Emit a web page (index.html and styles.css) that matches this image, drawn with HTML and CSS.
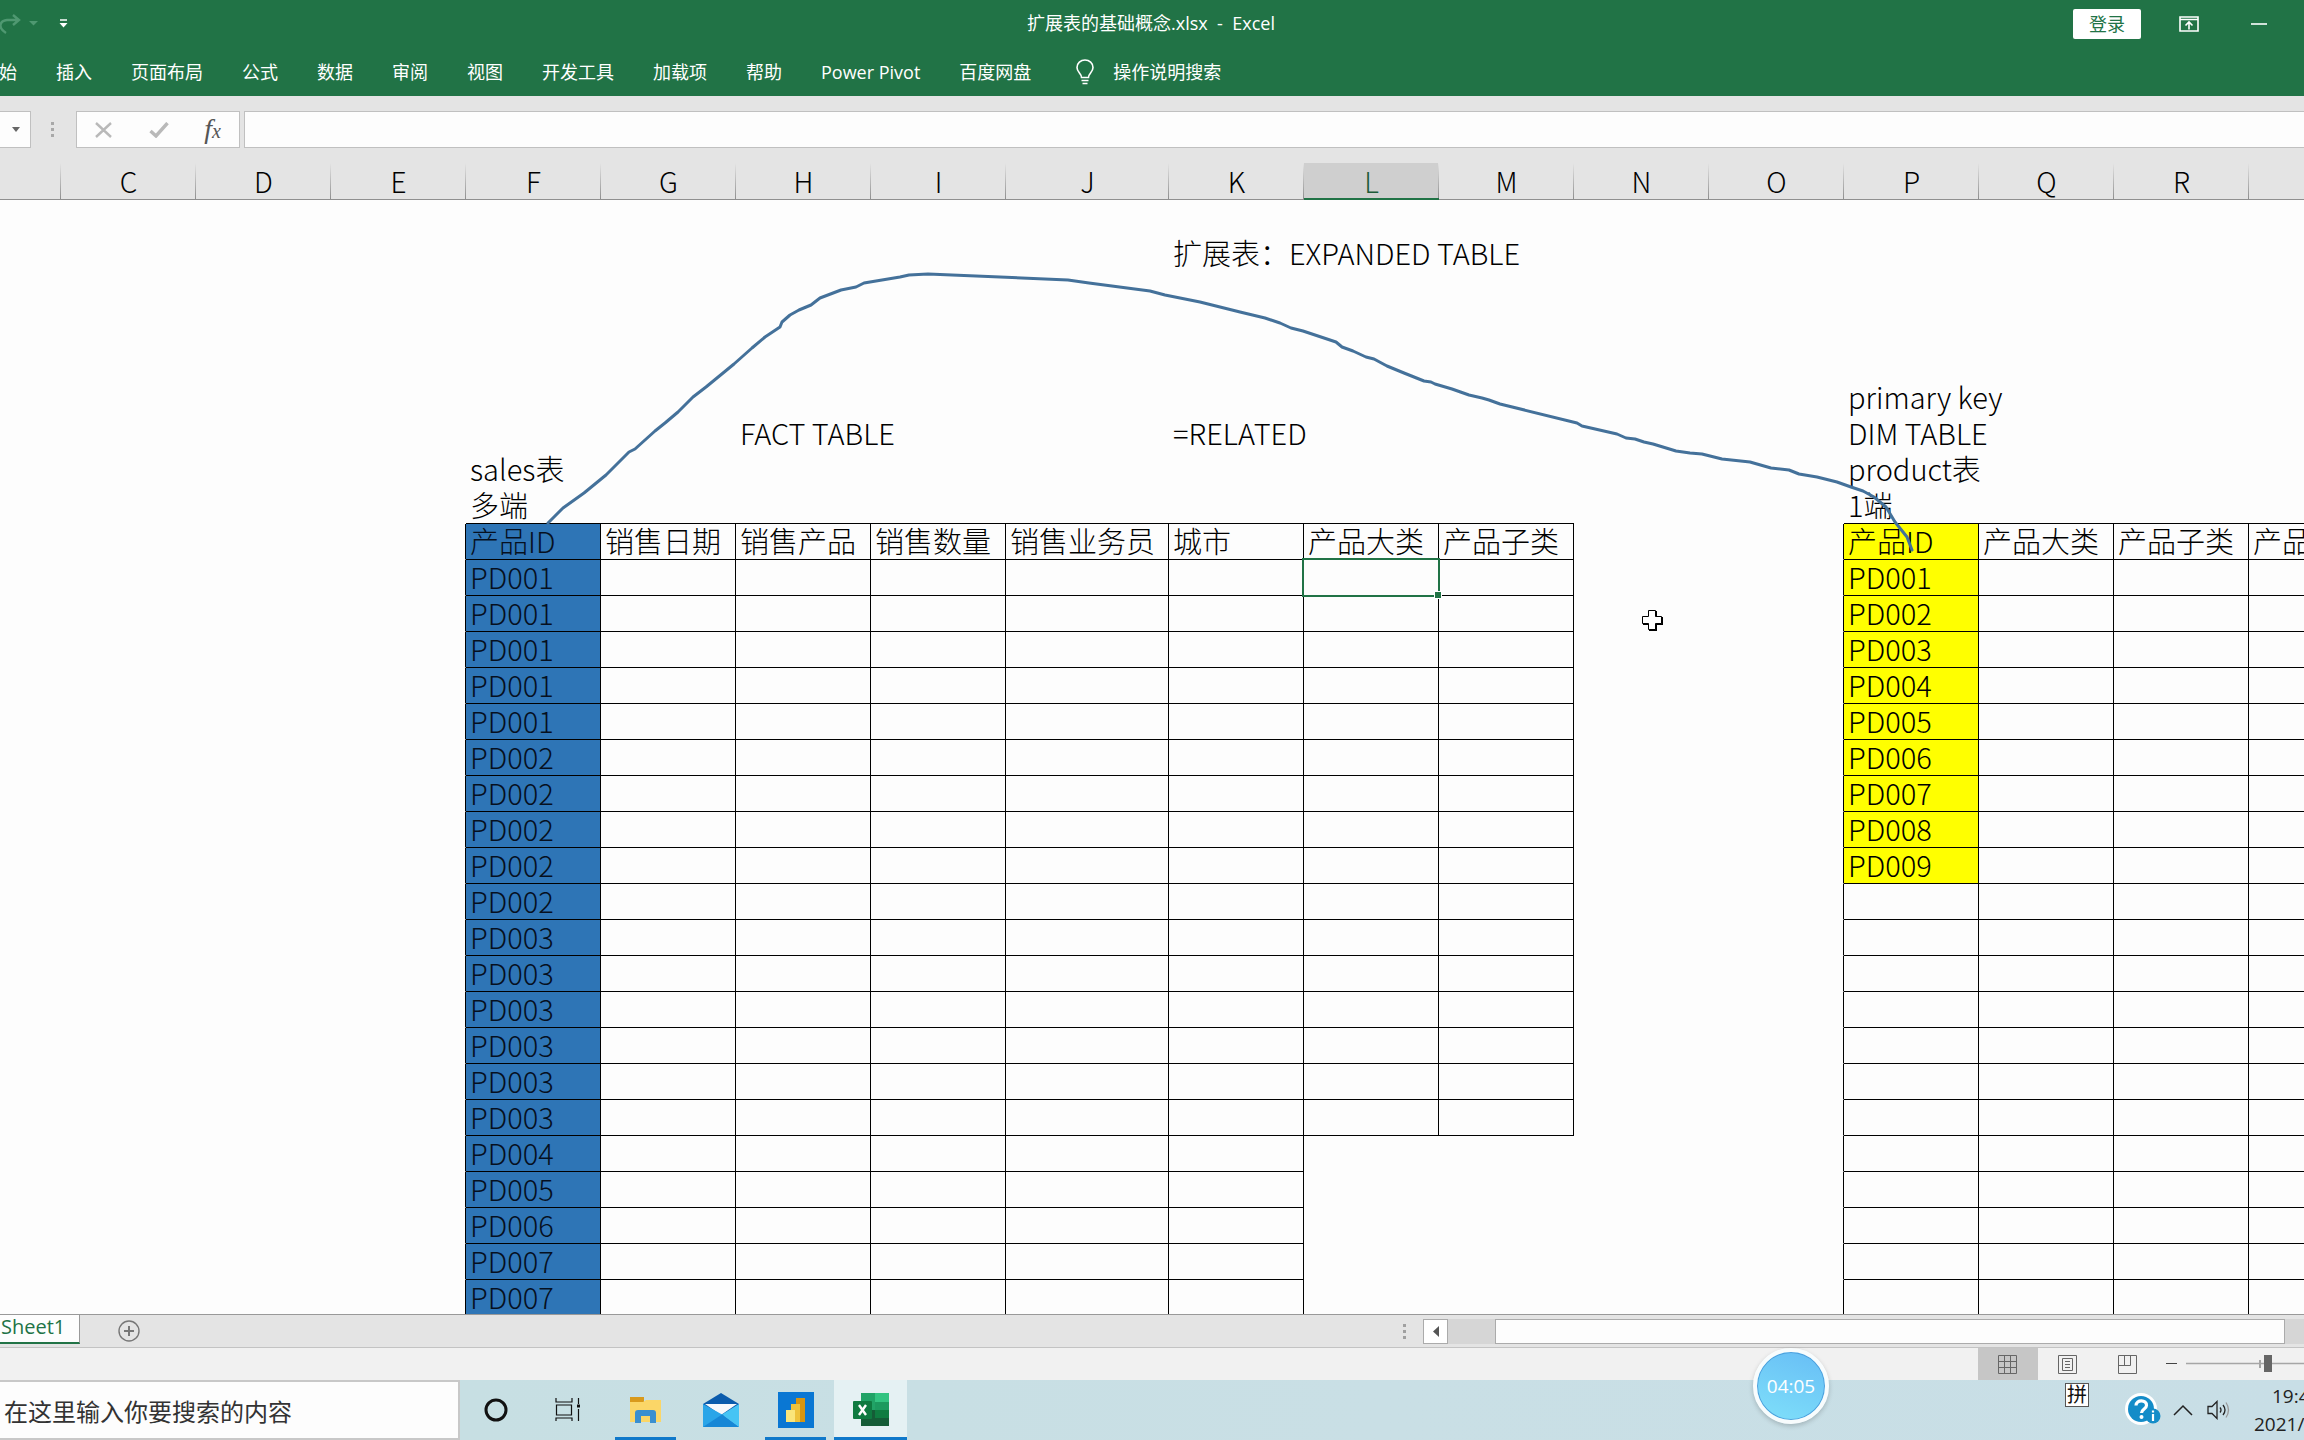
FILE: index.html
```html
<!DOCTYPE html>
<html lang="zh-CN">
<head>
<meta charset="utf-8">
<title>扩展表的基础概念.xlsx - Excel</title>
<link rel="stylesheet" href="styles.css">
</head>
<body>
<header class="ribbon">
  <div class="titlebar">
    <div class="quick">
      <svg width="80" height="20" viewBox="0 0 80 20" aria-hidden="true">
        <path d="M6 19C-2 14-1 7 7 6h11M13 1l6 5-6 5" fill="none" stroke="#4f9871" stroke-width="2.4"/>
        <path d="M29 7h9l-4.500 4.500z" fill="#4f9871"/>
        <path d="M60 6h7" stroke="#fff" stroke-width="1.500"/><path d="M59.500 9h8l-4 4.500z" fill="#fff"/>
      </svg>
    </div>
    <h1 class="title">扩展表的基础概念.xlsx&nbsp; -&nbsp; Excel</h1>
    <div class="window-tools">
      <button class="login">登录</button>
      <button class="icon-btn" aria-label="功能区显示选项"><svg width="20" height="16" viewBox="0 0 20 16"><path d="M1 1h18v14H1zM1 3.500h18M10 13.500V6.500M6.500 9.500 10 6l3.500 3.500" fill="none" stroke="#fff" stroke-width="1.600"/></svg></button>
      <button class="icon-btn" aria-label="最小化"><svg width="16" height="16" viewBox="0 0 16 16"><path d="M0 8h16" stroke="#fff" stroke-width="1.600"/></svg></button>
    </div>
  </div>
  <nav class="tabs">
    <a href="#">开始</a><a href="#">插入</a><a href="#">页面布局</a><a href="#">公式</a><a href="#">数据</a><a href="#">审阅</a><a href="#">视图</a><a href="#">开发工具</a><a href="#">加载项</a><a href="#">帮助</a><a href="#">Power Pivot</a><a href="#">百度网盘</a>
    <a href="#" class="tell-me"><svg width="18" height="26" viewBox="0 0 18 26" aria-hidden="true"><path d="M5.500 18.500c0-4-4.500-5-4.500-10a8 7.500 0 0 1 16 0c0 5-4.500 6-4.500 10zM5.500 21.500h7M6.500 24.500h5" fill="none" stroke="#fff" stroke-width="1.600"/></svg>操作说明搜索</a>
  </nav>
</header>

<div class="formula-bar">
  <button class="name-drop" aria-label="名称框"><svg width="8" height="5" viewBox="0 0 8 5"><path d="M0 0h8L4 5z" fill="#666"/></svg></button>
  <svg class="dots" width="3" height="15" viewBox="0 0 3 15" aria-hidden="true"><path d="M0 0h3v3H0zM0 6h3v3H0zM0 12h3v3H0z" fill="#a8a8a8"/></svg>
  <div class="fx-group">
    <button aria-label="取消"><svg width="18" height="16" viewBox="0 0 18 16"><path d="M1 1l15 14M16 1 1 15" stroke="#b9b9b9" stroke-width="2.400"/></svg></button>
    <button aria-label="输入"><svg width="20" height="16" viewBox="0 0 20 16"><path d="M1.500 9 7 14 18.500 1" fill="none" stroke="#b9b9b9" stroke-width="3.400"/></svg></button>
    <button class="fx" aria-label="插入函数">f<small>x</small></button>
  </div>
  <input class="formula" type="text" aria-label="编辑栏">
</div>

<main class="sheet">
<table class="grid">
<colgroup><col span="8"><col class="wide"><col span="9"></colgroup>
<thead><tr><th class="partial">B</th><th>C</th><th>D</th><th>E</th><th>F</th><th>G</th><th>H</th><th>I</th><th>J</th><th>K</th><th class="on">L</th><th>M</th><th>N</th><th>O</th><th>P</th><th>Q</th><th>R</th><th>S</th></tr></thead>
<tbody class="free">
<tr><td colspan="18"></td></tr>
<tr><td colspan="9"></td><td colspan="3">扩展表：EXPANDED TABLE</td><td colspan="6"></td></tr>
<tr><td colspan="18"></td></tr>
<tr><td colspan="18"></td></tr>
<tr><td colspan="18"></td></tr>
<tr><td colspan="14"></td><td colspan="2">primary key</td><td colspan="2"></td></tr>
<tr><td colspan="6"></td><td colspan="2">FACT TABLE</td><td></td><td colspan="2">=RELATED</td><td colspan="3"></td><td colspan="2">DIM TABLE</td><td colspan="2"></td></tr>
<tr><td colspan="4"></td><td>sales表</td><td colspan="9"></td><td>product表</td><td colspan="3"></td></tr>
<tr><td colspan="4"></td><td class="edge">多端</td><td colspan="7" class="edge"></td><td colspan="2"></td><td class="edge">1端</td><td colspan="3" class="edge"></td></tr>
</tbody>
<tbody class="data">
<tr><td class="gap" colspan="4"></td><td class="fact">产品ID</td><td>销售日期</td><td>销售产品</td><td>销售数量</td><td>销售业务员</td><td>城市</td><td>产品大类</td><td>产品子类</td><td class="gap" colspan="2"></td><td class="dim">产品ID</td><td>产品大类</td><td>产品子类</td><td>产品名称</td></tr>
<tr><td class="gap" colspan="4"></td><td class="fact">PD001</td><td></td><td></td><td></td><td></td><td></td><td class="active"></td><td></td><td class="gap" colspan="2"></td><td class="dim">PD001</td><td></td><td></td><td></td></tr>
<tr><td class="gap" colspan="4"></td><td class="fact">PD001</td><td></td><td></td><td></td><td></td><td></td><td></td><td></td><td class="gap" colspan="2"></td><td class="dim">PD002</td><td></td><td></td><td></td></tr>
<tr><td class="gap" colspan="4"></td><td class="fact">PD001</td><td></td><td></td><td></td><td></td><td></td><td></td><td></td><td class="gap" colspan="2"></td><td class="dim">PD003</td><td></td><td></td><td></td></tr>
<tr><td class="gap" colspan="4"></td><td class="fact">PD001</td><td></td><td></td><td></td><td></td><td></td><td></td><td></td><td class="gap" colspan="2"></td><td class="dim">PD004</td><td></td><td></td><td></td></tr>
<tr><td class="gap" colspan="4"></td><td class="fact">PD001</td><td></td><td></td><td></td><td></td><td></td><td></td><td></td><td class="gap" colspan="2"></td><td class="dim">PD005</td><td></td><td></td><td></td></tr>
<tr><td class="gap" colspan="4"></td><td class="fact">PD002</td><td></td><td></td><td></td><td></td><td></td><td></td><td></td><td class="gap" colspan="2"></td><td class="dim">PD006</td><td></td><td></td><td></td></tr>
<tr><td class="gap" colspan="4"></td><td class="fact">PD002</td><td></td><td></td><td></td><td></td><td></td><td></td><td></td><td class="gap" colspan="2"></td><td class="dim">PD007</td><td></td><td></td><td></td></tr>
<tr><td class="gap" colspan="4"></td><td class="fact">PD002</td><td></td><td></td><td></td><td></td><td></td><td></td><td></td><td class="gap" colspan="2"></td><td class="dim">PD008</td><td></td><td></td><td></td></tr>
<tr><td class="gap" colspan="4"></td><td class="fact">PD002</td><td></td><td></td><td></td><td></td><td></td><td></td><td></td><td class="gap" colspan="2"></td><td class="dim">PD009</td><td></td><td></td><td></td></tr>
<tr><td class="gap" colspan="4"></td><td class="fact">PD002</td><td></td><td></td><td></td><td></td><td></td><td></td><td></td><td class="gap" colspan="2"></td><td></td><td></td><td></td><td></td></tr>
<tr><td class="gap" colspan="4"></td><td class="fact">PD003</td><td></td><td></td><td></td><td></td><td></td><td></td><td></td><td class="gap" colspan="2"></td><td></td><td></td><td></td><td></td></tr>
<tr><td class="gap" colspan="4"></td><td class="fact">PD003</td><td></td><td></td><td></td><td></td><td></td><td></td><td></td><td class="gap" colspan="2"></td><td></td><td></td><td></td><td></td></tr>
<tr><td class="gap" colspan="4"></td><td class="fact">PD003</td><td></td><td></td><td></td><td></td><td></td><td></td><td></td><td class="gap" colspan="2"></td><td></td><td></td><td></td><td></td></tr>
<tr><td class="gap" colspan="4"></td><td class="fact">PD003</td><td></td><td></td><td></td><td></td><td></td><td></td><td></td><td class="gap" colspan="2"></td><td></td><td></td><td></td><td></td></tr>
<tr><td class="gap" colspan="4"></td><td class="fact">PD003</td><td></td><td></td><td></td><td></td><td></td><td></td><td></td><td class="gap" colspan="2"></td><td></td><td></td><td></td><td></td></tr>
<tr><td class="gap" colspan="4"></td><td class="fact">PD003</td><td></td><td></td><td></td><td></td><td></td><td></td><td></td><td class="gap" colspan="2"></td><td></td><td></td><td></td><td></td></tr>
<tr><td class="gap" colspan="4"></td><td class="fact">PD004</td><td></td><td></td><td></td><td></td><td></td><td class="gap" colspan="4"></td><td></td><td></td><td></td><td></td></tr>
<tr><td class="gap" colspan="4"></td><td class="fact">PD005</td><td></td><td></td><td></td><td></td><td></td><td class="gap" colspan="4"></td><td></td><td></td><td></td><td></td></tr>
<tr><td class="gap" colspan="4"></td><td class="fact">PD006</td><td></td><td></td><td></td><td></td><td></td><td class="gap" colspan="4"></td><td></td><td></td><td></td><td></td></tr>
<tr><td class="gap" colspan="4"></td><td class="fact">PD007</td><td></td><td></td><td></td><td></td><td></td><td class="gap" colspan="4"></td><td></td><td></td><td></td><td></td></tr>
<tr><td class="gap" colspan="4"></td><td class="fact">PD007</td><td></td><td></td><td></td><td></td><td></td><td class="gap" colspan="4"></td><td></td><td></td><td></td><td></td></tr>
</tbody>
</table>
<!-- Freehand line from the fact key to the dimension key, and the cell cursor -->
<svg class="ink" width="2304" height="1151" viewBox="0 163 2304 1151" aria-hidden="true">
  <polyline fill="none" stroke="#44719a" stroke-width="3" stroke-linejoin="round" stroke-linecap="round" points="548,523 563,508 584,493 606,475 629,452 635,449 655,431 665,423 678,412 693,397 706,387 734,364 752,348 765,337 780,327 782,322 790,315 799,310 811,305 820,298 841,290 856,287 864,283 882,280 900,277 909,275 928,274 1068,280 1089,283 1150,291 1165,295 1200,302 1240,312 1265,318 1280,323 1291,328 1303,331 1336,342 1342,347 1353,351 1366,357 1374,359 1387,366 1404,373 1424,381 1431,382 1435,384 1452,389 1469,395 1482,398 1489,400 1500,404 1577,423 1582,426 1617,434 1626,438 1635,439 1644,442 1653,444 1676,451 1690,453 1702,454 1722,459 1750,462 1771,468 1789,470 1799,474 1817,477 1837,482 1851,487 1863,491 1874,497 1886,507 1895,522 1907,537 1912,550"/>
  <path d="M1649 611h8v6h6v8h-6v6h-8v-6h-6v-8h6z" fill="#000"/>
  <path d="M1648.500 610.500h7v6h6v7h-6v6h-7v-6h-6v-7h6z" fill="#fff" stroke="#000"/>
</svg>
</main>

<footer class="sheet-bar">
  <a class="sheet-tab" href="#">Sheet1</a>
  <button class="add" aria-label="新工作表"><svg width="22" height="22" viewBox="0 0 22 22"><circle cx="11" cy="11" r="10" fill="none" stroke="#777" stroke-width="1.400"/><path d="M11 6v10M6 11h10" stroke="#777" stroke-width="2"/></svg></button>
  <div class="hscroll">
    <svg class="dots" width="3" height="15" viewBox="0 0 3 15" aria-hidden="true"><path d="M0 0h3v3H0zM0 6h3v3H0zM0 12h3v3H0z" fill="#a0a0a0"/></svg>
    <button class="arrow" aria-label="向左滚动"><svg width="6" height="11" viewBox="0 0 6 11"><path d="M6 0v11L0 5.500z" fill="#555"/></svg></button>
    <div class="track"><div class="thumb"></div></div>
  </div>
</footer>

<div class="status">
  <button class="view on" aria-label="普通"><svg width="19" height="19" viewBox="0 0 19 19"><path d="M.5.500h18v18H.5zM6.500.500v18M12.500.500v18M.5 6.500h18M.5 12.500h18" fill="none" stroke="#666"/></svg></button>
  <button class="view" aria-label="页面布局"><svg width="19" height="19" viewBox="0 0 19 19"><path d="M.5.500h18v18H.5zM4.500 3.500h10v12h-10zM7 6.500h5M7 9.500h5M7 12.500h5" fill="none" stroke="#666"/></svg></button>
  <button class="view" aria-label="分页预览"><svg width="19" height="19" viewBox="0 0 19 19"><path d="M.5.500h18v18H.5zM.5 10.500h12M6.500.500v10M12.500.500v10" fill="none" stroke="#666"/></svg></button>
  <svg class="zoom" width="146" height="32" viewBox="0 0 146 32" aria-hidden="true"><path d="M8 15.500h11" stroke="#444"/><path d="M28 15.500h118" stroke="#a6a6a6" stroke-width="1.500"/><path d="M102 12v8" stroke="#a6a6a6" stroke-width="2"/><path d="M106 7h8v17h-8z" fill="#666"/></svg>
</div>

<div class="taskbar">
  <input class="search" type="text" aria-label="搜索" placeholder="在这里输入你要搜索的内容">
  <button class="app tool" aria-label="Cortana"><svg width="26" height="26" viewBox="0 0 26 26"><circle cx="13" cy="13" r="10" fill="none" stroke="#111" stroke-width="3"/></svg></button>
  <button class="app tool" aria-label="任务视图"><svg width="26" height="26" viewBox="0 0 26 26"><path d="M1 1v4h16V1M1.500 8h15v10h-15zM1 24v-3h16v3M23.500 1v6M23.500 12v12" fill="none" stroke="#111" stroke-width="1.200"/><path d="M22 7.500h3v3h-3z" fill="#111"/></svg></button>
  <div class="apps">
  <button class="app open" aria-label="文件资源管理器"><svg width="34" height="28" viewBox="0 0 34 28"><path d="M1 1h14v6H1z" fill="#d99a1c"/><path d="M1 6h13l3-2h15v22H1z" fill="#fbd667"/><path d="M6 27V17q0-3 3-3h15q3 0 3 3v10h-6v-7h-9v7z" fill="#3a8fd0"/></svg></button>
  <button class="app" aria-label="邮件"><svg width="36" height="34" viewBox="0 0 36 34"><path d="M0 11 18 0l18 11v12H0z" fill="#0b5cad"/><path d="M2 11h32L18 22z" fill="#f7f9fc"/><path d="M0 11 20 22 36 34H0z" fill="#2aa5e8"/><path d="M36 11v23L19 21.500z" fill="#46c4f4"/><path d="M0 34 19 21.500 36 34z" fill="#1787d6"/></svg></button>
  <button class="app open" aria-label="Power BI"><svg width="36" height="36" viewBox="0 0 36 36"><path d="M0 0h36v36H0z" fill="#0a77d3"/><path d="M18 6h9v24h-9z" fill="#d69511"/><path d="M13 12h9v18h-9z" fill="#eec23c"/><path d="M8 18h9v12H8z" fill="#fae57b"/></svg></button>
  <button class="app open current" aria-label="Excel"><svg width="36" height="34" viewBox="0 0 36 34"><path d="M8 0h14v17H8z" fill="#21a366"/><path d="M22 0h14v9H22z" fill="#33c481"/><path d="M22 9h14v8H22z" fill="#1d9a5f"/><path d="M8 17h28v16H8z" fill="#155c37"/><path d="M22 17h14v8H22z" fill="#107c41"/><rect y="8" width="19" height="18" rx="1" fill="#0f7a40"/><path d="M6 12l7 10M13 12 6 22" stroke="#fff" stroke-width="2.400"/></svg></button>
  </div>
  <div class="tray">
    <span class="ime">拼</span>
    <svg class="help" width="36" height="34" viewBox="0 0 36 34" aria-hidden="true"><circle cx="16" cy="16" r="16" fill="#fff"/><circle cx="16" cy="16" r="13" fill="#148cc8"/><path d="M11 12.500c0-6.500 11-6 10.500 0C21.500 16 16.500 16 16.500 20" fill="none" stroke="#fff" stroke-width="3.200"/><circle cx="16.500" cy="24" r="2" fill="#fff"/><circle cx="28" cy="23" r="7.500" fill="#148cc8"/><path d="M28 21v7M28 17.500v2" stroke="#fff" stroke-width="2.200"/></svg>
    <svg class="chev" width="20" height="12" viewBox="0 0 20 12" aria-hidden="true"><path d="M1 11 10 2l9 9" fill="none" stroke="#222" stroke-width="1.500"/></svg>
    <svg class="vol" width="24" height="20" viewBox="0 0 24 20" aria-hidden="true"><path d="M1 6.500h4L10 1.500v17L5 13.500H1zM13 7.500q2 2.500 0 5M16 5q4 5 0 10" fill="none" stroke="#222" stroke-width="1.300"/><path d="M19 2.500q5 7.500 0 15" fill="none" stroke="#999" stroke-width="1.300"/></svg>
    <div class="clock"><span class="hour">19:4</span><span>2021/</span></div>
  </div>
  <div class="timer">04:05</div>
</div>
</body>
</html>
```
FILE: styles.css
```css
* { box-sizing: border-box; }
body {
  margin: 0; height: 100vh; overflow: hidden;
  display: flex; flex-direction: column;
  font: 18px/24px "Open Sans", "Noto Sans CJK SC", sans-serif;
  color: #111; background: #fdfdfd;
}
button { margin: 0; padding: 0; border: 0; background: none; font: inherit; color: inherit; }
a { color: inherit; text-decoration: none; }
svg { display: block; flex: none; }

/* Title bar and ribbon tabs */
.ribbon { flex: none; height: 96px; background: #217346; color: #fff; }
.titlebar { height: 48px; display: grid; grid-template-columns: 1fr auto 1fr; align-items: center; }
.title { margin: 0; padding: 0 2px 2px 0; font-size: 18px; font-weight: 400; }
.window-tools { display: flex; align-items: center; justify-content: flex-end; padding-right: 37px; }
.login { width: 68px; height: 30px; margin-right: 38px; border-radius: 2px; background: #fff; color: #217346; }
.icon-btn + .icon-btn { margin-left: 52px; }
.tabs { height: 48px; display: flex; align-items: center; gap: 39px; margin-left: -19px; white-space: nowrap; }
.tell-me { display: flex; align-items: center; gap: 19px; margin-left: 6px; }

/* Formula bar */
.formula-bar { flex: none; height: 67px; padding: 15px 0; display: flex; align-items: center; background: #e4e4e4; }
.name-drop { width: 31px; height: 37px; padding-right: 10px; display: flex; align-items: center; justify-content: flex-end; background: #fdfdfd; border: 1px solid #c0c0c0; border-left: 0; }
.formula-bar .dots { margin: 0 22px 0 20px; }
.fx-group { width: 164px; height: 37px; display: flex; align-items: center; justify-content: space-between; padding: 0 18px; background: #fdfdfd; border: 1px solid #c0c0c0; }
.fx { font: italic 28px/32px "Liberation Serif", serif; color: #555; }
.fx small { font-size: 20px; }
.formula { flex: 1; height: 37px; margin-left: 4px; border: 1px solid #c0c0c0; border-right: 0; background: #fdfdfd; }

/* Worksheet */
.sheet { flex: 1; min-height: 0; position: relative; overflow: hidden; }
.grid {
  width: 2458px; margin-left: -74px; table-layout: fixed;
  border-collapse: separate; border-spacing: 0;
  font: 300 29px/32px "Noto Sans CJK SC", sans-serif; color: #000;
}
.grid col { width: 135px; }
.grid .wide { width: 163px; }
.grid th {
  height: 37px; padding: 0; font-weight: 300; font-size: 28px; text-align: center;
  background: #e4e4e4 linear-gradient(#e4e4e4, #8f8f8f) right / 1px 100% no-repeat;
  border-bottom: 1px solid #8f8f8f;
}
.grid .partial { padding-right: 6px; }
.grid th.on { background-color: #cfcfcf; border-bottom: 2px solid #217346; color: #1c5a38; }
.grid td { height: 36px; padding: 0 0 3px 4px; white-space: nowrap; }
.free td { border-bottom: 1px solid transparent; }
.free .edge { border-bottom-color: #000; }
.data td { border-right: 1px solid #000; border-bottom: 1px solid #000; }
.data .gap { border-bottom-color: transparent; }
.data .fact { background: #2e75b6; color: #06101f; }
.data .dim { background: #ff0; }
.active { position: relative; }
.active::before { content: ""; position: absolute; inset: -2px; border: 2px solid #217346; }
.active::after { content: ""; position: absolute; right: -3px; bottom: -3px; width: 6px; height: 6px; background: #217346; outline: 1px solid #fff; }
.ink { position: absolute; left: 0; top: 0; }

/* Sheet tabs and horizontal scroll bar */
.sheet-bar { flex: none; height: 34px; display: flex; background: #e4e4e4; border-top: 1px solid #999; border-bottom: 1px solid #c3c3c3; }
.sheet-tab { width: 80px; height: 29px; padding-left: 1px; font-size: 20px; color: #217346; background: #fdfdfd; border-right: 1px solid #999; border-bottom: 2px solid #217346; }
.add { margin-left: 38px; }
.hscroll { width: 901px; margin-left: auto; display: flex; align-items: center; }
.hscroll .dots { margin-right: 17px; }
.arrow { width: 25px; height: 25px; display: grid; place-items: center; background: #fff; border: 1px solid #ababab; }
.track { flex: 1; height: 25px; padding: 0 19px 0 47px; background: #d6d6d6; }
.thumb { height: 25px; background: #fdfdfd; border: 1px solid #ababab; }

/* Status bar */
.status { flex: none; height: 32px; display: flex; justify-content: flex-end; background: #f1f1f1; }
.view { width: 60px; height: 32px; padding-right: 1px; display: grid; place-items: center; }
.view.on { background: #c6c6c6; }

/* Taskbar */
.taskbar { flex: none; height: 60px; position: relative; display: flex; background: linear-gradient(90deg, #c6dfe2, #c9dfe5 60%, #c8dee6); }
.search { width: 460px; height: 60px; padding: 0 0 0 4px; border: 2px solid #c8c8c8; border-left: 0; background: #fdfdfd; font-family: "Noto Sans CJK SC", sans-serif; font-size: 24px; }
.search::placeholder { color: #333; opacity: 1; }
.apps { display: flex; gap: 2px; margin-left: 5px; }
.app { width: 73px; height: 60px; display: grid; place-items: center; border: solid transparent; border-width: 3px 0; }
.tool { width: 72px; }
.open { background: linear-gradient(#1079ca, #1079ca) center bottom / 61px 3px no-repeat border-box; }
.current { background: linear-gradient(#1079ca, #1079ca) center bottom / 100% 3px no-repeat border-box #e5f1f3; }
.tray { margin-left: auto; display: flex; align-items: center; }
.ime { width: 24px; height: 24px; margin: 0 36px 30px 0; border: 1px solid #555; background: #fff; font-size: 20px; line-height: 22px; text-align: center; }
.chev { margin: 0 14px 0 12px; }
.clock { width: 73px; padding-left: 23px; font-size: 19px; line-height: 28px; color: #222; }
.clock span { display: block; white-space: nowrap; }
.clock .hour { padding-left: 18px; }
.timer {
  position: absolute; right: 475px; top: -32px; width: 76px; height: 76px;
  border: 4px solid #f8fcfd; border-radius: 50%;
  background: linear-gradient(200deg, #67bdf5, #7fe0fa); box-shadow: inset 0 0 0 1px #4d9fdc, 0 2px 5px #0003;
  color: #fff; font-size: 19px; line-height: 68px; text-align: center;
}
```
